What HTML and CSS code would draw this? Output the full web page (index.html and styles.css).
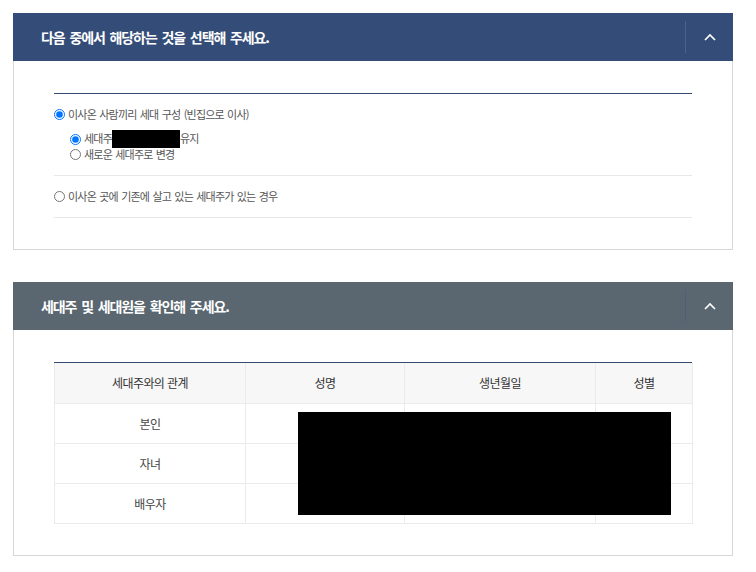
FILE: index.html
```html
<!DOCTYPE html>
<html lang="ko">
<head>
<meta charset="utf-8">
<title>세대 구성</title>
<link rel="stylesheet" href="styles.css">
</head>
<body>
<section class="panel">
  <div class="panel-head head-navy">
    <h2 class="panel-title">다음 중에서 해당하는 것을 선택해 주세요.</h2>
    <button class="toggle" type="button" aria-label="접기">
      <svg width="12" height="8" viewBox="0 0 12 8"><polyline points="1,7 6,2 11,7" fill="none" stroke="#fff" stroke-width="1.7"/></svg>
    </button>
  </div>
  <div class="panel-body">
    <ul class="options">
      <li class="option option-first">
        <label class="radio"><input type="radio" name="opt" checked><span>이사온 사람끼리 세대 구성 (빈집으로 이사)</span></label>
        <ul class="sub-options">
          <li class="sub-first"><label class="radio"><input type="radio" name="sub" checked><span>세대주<span class="redact-inline"></span>유지</span></label></li>
          <li class="sub-last"><label class="radio"><input type="radio" name="sub"><span>새로운 세대주로 변경</span></label></li>
        </ul>
      </li>
      <li class="option">
        <label class="radio"><input type="radio" name="opt"><span>이사온 곳에 기존에 살고 있는 세대주가 있는 경우</span></label>
      </li>
    </ul>
  </div>
</section>

<section class="panel panel-second">
  <div class="panel-head head-slate">
    <h2 class="panel-title">세대주 및 세대원을 확인해 주세요.</h2>
    <button class="toggle" type="button" aria-label="접기">
      <svg width="12" height="8" viewBox="0 0 12 8"><polyline points="1,7 6,2 11,7" fill="none" stroke="#fff" stroke-width="1.7"/></svg>
    </button>
  </div>
  <div class="panel-body">
    <div class="table-wrap">
      <table class="members">
        <colgroup>
          <col class="c1"><col class="c2"><col class="c3"><col class="c4">
        </colgroup>
        <thead>
          <tr><th>세대주와의 관계</th><th>성명</th><th>생년월일</th><th>성별</th></tr>
        </thead>
        <tbody>
          <tr><td>본인</td><td></td><td></td><td></td></tr>
          <tr><td>자녀</td><td></td><td></td><td></td></tr>
          <tr><td>배우자</td><td></td><td></td><td></td></tr>
        </tbody>
      </table>
      <div class="redact-block"></div>
    </div>
  </div>
</section>
</body>
</html>
```

FILE: styles.css
```css
* { box-sizing: border-box; }

body {
  margin: 0;
  padding: 13px 23px 13px 13px;
  background: #fff;
  font-family: "Noto Sans CJK KR", "Noto Sans", sans-serif;
  color: #333;
}

.panel {
  width: 720px;
}

.panel-second {
  margin-top: 32px;
}

.panel-head {
  height: 48px;
  display: flex;
  align-items: center;
  justify-content: space-between;
  padding-left: 28px;
}

.head-navy { background: #344d78; }
.head-slate { background: #5a6670; }

.panel-title {
  margin: 0;
  font-size: 14px;
  font-weight: 700;
  color: #fff;
  letter-spacing: -1.1px;
  word-spacing: 2px;
  line-height: 20px;
}

.toggle {
  width: 48px;
  height: 32px;
  border: 0;
  border-left: 1px solid rgba(255, 255, 255, 0.12);
  background: transparent;
  padding: 0;
  display: flex;
  align-items: center;
  justify-content: center;
  cursor: pointer;
}

.head-slate .toggle { border-left-color: #4d5f7c; }

.panel-body {
  border: 1px solid #d6d6d6;
  border-top: 0;
  padding: 32px 40px 31px;
}

.options {
  list-style: none;
  margin: 0;
  padding: 0;
  border-top: 1px solid #34496f;
}

.option {
  padding: 13px 0 12.5px;
  border-bottom: 1px solid #e8e8e8;
}

.sub-options {
  list-style: none;
  margin: 9px 0 0;
  padding: 0 0 0 16px;
}

.sub-first { height: 16px; }
.sub-last { height: 15.5px; }

.sub-options .radio { height: 100%; }

.radio {
  display: flex;
  align-items: center;
  font-size: 11px;
  line-height: 15px;
  color: #555;
  letter-spacing: -0.8px;
  word-spacing: 1px;
}

.radio input {
  width: 11px;
  height: 11px;
  margin: 0 3px 0 0;
  flex: none;
}

.redact-inline {
  display: inline-block;
  width: 68px;
  height: 18px;
  margin: -3px 0 -1px;
  background: #000;
  vertical-align: middle;
}

.table-wrap {
  position: relative;
  border-top: 1px solid #34496f;
}

.members {
  width: 100%;
  border-collapse: collapse;
  table-layout: fixed;
  font-size: 12px;
  letter-spacing: -0.6px;
  color: #333;
}

.c1 { width: 191px; }
.c2 { width: 159px; }
.c3 { width: 191px; }
.c4 { width: 97px; }

.members th,
.members td {
  border: 1px solid #ebebeb;
  text-align: center;
  height: 40px;
  padding: 0;
  font-weight: 400;
}

.members td { color: #444; }

.members thead th {
  border-top: 0;
  background: #f7f7f7;
  height: 41px;
}

.redact-block {
  position: absolute;
  left: 244px;
  top: 49px;
  width: 373px;
  height: 103px;
  background: #000;
}
```
